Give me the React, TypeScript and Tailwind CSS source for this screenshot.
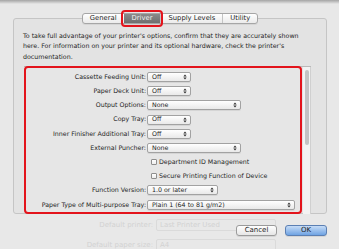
import React from "react";

// Small up/down arrows used on the right of each popup button
const Arrows = () => (
  <svg width="4" height="6" viewBox="0 0 4 6" className="shrink-0">
    <path d="M0.3 2.4 L2 0.6 L3.7 2.4 Z" fill="#333" />
    <path d="M0.3 3.6 L2 5.4 L3.7 3.6 Z" fill="#333" />
  </svg>
);

type PopupProps = { value: string; width: string };

const Popup = ({ value, width }: PopupProps) => (
  <div
    className={`${width} h-[10px] flex items-center justify-between rounded-[2px] border border-[#a2a2a2] bg-gradient-to-b from-white to-[#e9e9e9] pl-[4px] pr-[3px] shadow-[0_1px_0_rgba(0,0,0,0.07)]`}
  >
    <span className="leading-none">{value}</span>
    <Arrows />
  </div>
);

const Row = ({ label, children }: { label: string; children: React.ReactNode }) => (
  <div className="flex h-[14.2px] items-center">
    <div className="w-[121px] pr-[1px] text-right leading-none">{label}</div>
    {children}
  </div>
);

const Check = ({ label }: { label: string }) => (
  <div className="flex h-[14.2px] items-center pl-[125px]">
    <span className="mr-[2px] h-[6px] w-[6px] rounded-[1px] border border-[#8e8e8e] bg-gradient-to-b from-white to-[#ededed]" />
    <span className="leading-none">{label}</span>
  </div>
);

const tabs = ["General", "Driver", "Supply Levels", "Utility"];

export default function App() {
  return (
    <div className="relative h-[249px] w-[339px] overflow-hidden bg-[#e8e8e8] font-['DejaVu_Sans',sans-serif] text-[6.3px] text-[#1e1e1e]">
      {/* window behind the sheet, showing through faintly */}
      <div className="absolute left-[78px] top-[215px] text-[7px] text-[#d2d2d2]">
        <div className="flex h-[20px] items-center">
          <span className="w-[75px] text-right">Default printer:</span>
          <span className="ml-[3px] h-[12px] w-[120px] rounded-[2px] border border-[#dadada] pl-[3px]">Last Printer Used</span>
        </div>
        <div className="flex h-[20px] items-center">
          <span className="w-[75px] text-right">Default paper size:</span>
          <span className="ml-[3px] h-[12px] w-[120px] rounded-[2px] border border-[#dadada] pl-[3px]">A4</span>
        </div>
      </div>

      {/* sheet shadow along the top */}
      <div className="h-[4px] bg-gradient-to-b from-[#a4a4a4] to-[#e8e8e8]" />

      <div className="relative pl-[13px] pt-[9px]">
        {/* tab bar */}
        <div className="relative z-10 flex w-[314px] justify-center">
          <div className="flex h-[11px] items-stretch rounded-[3px] border border-[#a6a6a6] bg-gradient-to-b from-white to-[#ebebeb] text-[6.8px] shadow-[0_1px_0_rgba(0,0,0,0.06)]">
            {tabs.map((t, i) => {
              const selected = t === "Driver";
              return (
                <div
                  key={t}
                  className={
                    selected
                      ? "relative flex items-center bg-gradient-to-b from-[#8a8a8a] to-[#6f6f6f] px-[8px] text-[#f2f2f2]"
                      : `flex items-center px-[7px] ${i > 1 ? "border-l border-[#c4c4c4]" : ""}`
                  }
                >
                  {t}
                  {selected && (
                    <span className="absolute -inset-x-[3px] -inset-y-[4px] rounded-[4px] border-[2px] border-[#e3141c]" />
                  )}
                </div>
              );
            })}
          </div>
        </div>

        {/* tab view box */}
        <div className="-mt-[6px] h-[196px] w-[314px] rounded-[3px] border border-[#c5c5c5] bg-[#e3e3e3] pl-[9px] pt-[12px]">
          <p className="w-[290px] leading-[10.3px]">
            To take full advantage of your printer's options, confirm that they are accurately shown
            here. For information on your printer and its optional hardware, check the printer's
            documentation.
          </p>

          {/* scroll view */}
          <div className="ml-[1px] mt-[4px] flex h-[148px] w-[287px] border-t border-[#b9b9b9]">
            <div className="-mt-[1px] flex-1 rounded-[4px] border-[2px] border-[#e3141c] bg-[#e6e6e6] pt-[2px]">
              <Row label="Cassette Feeding Unit:">
                <Popup value="Off" width="w-[44px]" />
              </Row>
              <Row label="Paper Deck Unit:">
                <Popup value="Off" width="w-[44px]" />
              </Row>
              <Row label="Output Options:">
                <Popup value="None" width="w-[94px]" />
              </Row>
              <Row label="Copy Tray:">
                <Popup value="Off" width="w-[44px]" />
              </Row>
              <Row label="Inner Finisher Additional Tray:">
                <Popup value="Off" width="w-[44px]" />
              </Row>
              <Row label="External Puncher:">
                <Popup value="None" width="w-[94px]" />
              </Row>
              <Check label="Department ID Management" />
              <Check label="Secure Printing Function of Device" />
              <Row label="Function Version:">
                <Popup value="1.0 or later" width="w-[71px]" />
              </Row>
              <Row label="Paper Type of Multi-purpose Tray:">
                <Popup value="Plain 1 (64 to 81 g/m2)" width="w-[148px]" />
              </Row>
            </div>
            {/* scroller */}
            <div className="ml-[1px] flex w-[8px] justify-center border-r border-[#d0d0d0] bg-[#f3f3f3] pt-[3px]">
              <div className="h-[75px] w-[4px] rounded-full bg-[#c3c3c3]" />
            </div>
          </div>
        </div>

        {/* buttons */}
        <div className="mt-[11px] flex w-[314px] justify-end gap-[8px] text-[7px]">
          <button className="flex h-[11px] w-[41px] items-center justify-center rounded-[3px] border border-[#9b9b9b] bg-gradient-to-b from-white to-[#e6e6e6] shadow-[0_1px_0_rgba(0,0,0,0.08)]">
            Cancel
          </button>
          <button className="flex h-[11px] w-[42px] items-center justify-center rounded-[3px] border border-[#5b7fb3] bg-gradient-to-b from-[#c6dcf6] to-[#6fa3e3] shadow-[0_1px_0_rgba(0,0,0,0.08)]">
            OK
          </button>
        </div>
      </div>
    </div>
  );
}
